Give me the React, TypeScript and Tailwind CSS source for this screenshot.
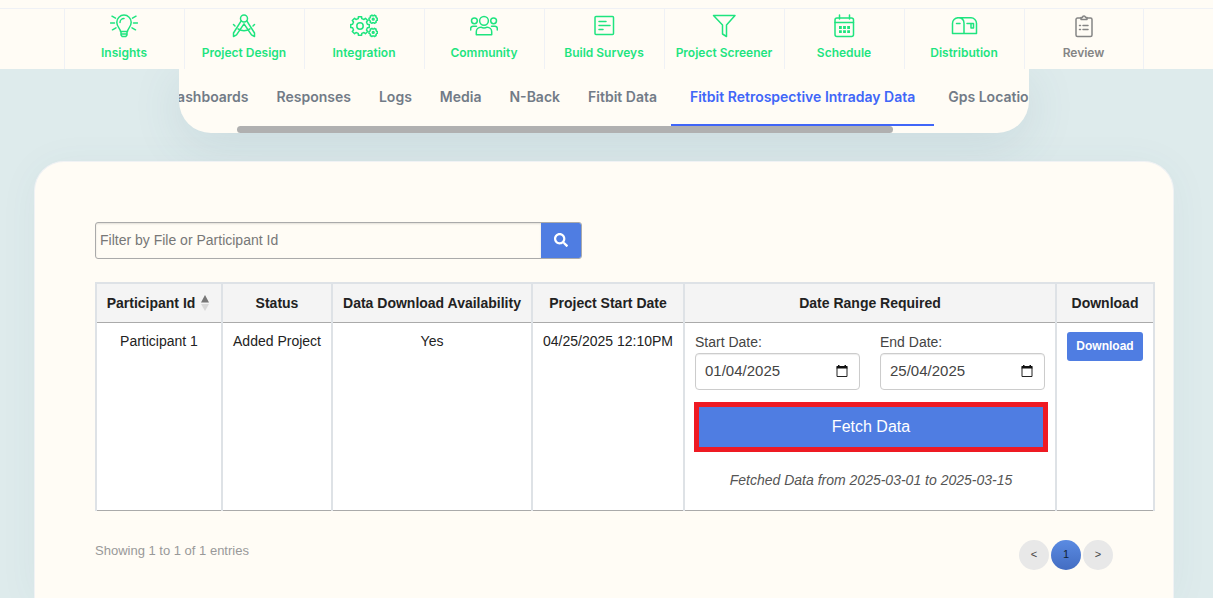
import { useState } from "react"
import type { ReactNode } from "react"
import clsx from "clsx"
import { FaSearch } from "react-icons/fa"

interface Step {
  label: string
  icon: ReactNode
  done: boolean
}

interface DateFieldProps {
  id: string
  label: string
  value: string
  onChange: (value: string) => void
}

const gear = (cx: number, cy: number, outer: number, inner: number, teeth: number) => {
  const step = (Math.PI * 2) / teeth
  const points: string[] = []
  for (let i = 0; i < teeth; i++) {
    const a = i * step
    const corners = [
      [inner, -0.3],
      [outer, -0.22],
      [outer, 0.22],
      [inner, 0.3],
    ]
    corners.forEach(([r, offset]) => {
      const angle = a + offset * step
      points.push(`${(cx + r * Math.cos(angle)).toFixed(2)} ${(cy + r * Math.sin(angle)).toFixed(2)}`)
    })
  }
  return `M${points.join("L")}Z`
}

const steps: Step[] = [
  {
    label: "Insights",
    done: true,
    icon: (
      <>
        <path d="M10.5 17.5c0-3-3.7-4.2-3.7-9.2a7.2 7.2 0 0 1 14.4 0c0 5-3.7 6.2-3.7 9.2z" />
        <path d="M11 17.5v3.6l1.2 1.4h3.6l1.2-1.4v-3.6M11 20h6M10 8.5a4 4 0 0 1 4-4" />
        <path d="M.5 9h4M23.5 9h4M2 2.2l3.500 2M26 2.2l-3.500 2M2.500 15.800l3.500-2M25.500 15.800l-3.500-2" />
      </>
    ),
  },
  {
    label: "Project Design",
    done: true,
    icon: (
      <>
        <circle cx="14" cy="4.5" r="3.5" />
        <path d="M11.2 6.800L3.500 19v3.500l3-1.600L14 9.800l7.500 11.100 3 1.600V19L16.800 6.800" />
        <path d="M3.500 10.500L5 12M8 14.800c3.500 2.200 8.500 2.200 12 0M23 12l1.500-1.500" />
      </>
    ),
  },
  {
    label: "Integration",
    done: true,
    icon: (
      <>
        <path d={gear(10, 12, 9.4, 7.6, 8)} />
        <circle cx="10" cy="12" r="3.2" />
        <path d={gear(23.2, 5.2, 4.3, 3.6, 6)} />
        <circle cx="23.2" cy="5.2" r="0.9" />
        <path d={gear(23.2, 18.4, 4.3, 3.6, 6)} />
        <circle cx="23.2" cy="18.4" r="0.9" />
      </>
    ),
  },
  {
    label: "Community",
    done: true,
    icon: (
      <>
        <circle cx="14" cy="6.8" r="4.4" />
        <circle cx="4.4" cy="6.8" r="2.9" />
        <circle cx="23.6" cy="6.8" r="2.9" />
        <path d="M6.3 20.7v-3a4.5 4.5 0 0 1 4.5-4.5c2 1 4.4 1 6.4 0a4.5 4.5 0 0 1 4.5 4.5v3z" />
        <path d="M.7 16v-1.500a2.300 2.300 0 0 1 2.300-2.300h3.500M27.300 16v-1.500a2.300 2.300 0 0 0-2.300-2.300h-3.500" />
      </>
    ),
  },
  {
    label: "Build Surveys",
    done: true,
    icon: (
      <>
        <rect x="5" y="2.5" width="18.5" height="18" rx="1" />
        <path d="M9 7.5h7M9 11.5h11M9 15.5h4" />
      </>
    ),
  },
  {
    label: "Project Screener",
    done: true,
    icon: <path d="M3.5 1.5h21.5l-8.5 9.5v11.5l-4-2.500v-9z" />,
  },
  {
    label: "Schedule",
    done: true,
    icon: (
      <>
        <rect x="5" y="4" width="18.5" height="18.5" rx="2" />
        <path d="M5 8.5h18.500M9.500 1v4M19.500 1v4" />
        <path d="M9 13.500h11M9 17.700h11" strokeWidth="2.8" strokeDasharray="2.8 1.3" strokeLinecap="butt" />
      </>
    ),
  },
  {
    label: "Distribution",
    done: true,
    icon: (
      <>
        <path d="M8 3.800h13a5.500 5.500 0 0 1 5.500 5.500v10.200h-24V9.500A5.600 5.600 0 0 1 8 3.800c4 0 6 2.500 6 5.500v10" />
        <path d="M6.500 9.500h3.500M17 9.500h6.500v4.500h-2.500v-4.500" />
      </>
    ),
  },
  {
    label: "Review",
    done: false,
    icon: (
      <>
        <path d="M11 4H7.500A1.500 1.500 0 0 0 6 5.500V21a1.500 1.500 0 0 0 1.500 1.500h13A1.500 1.500 0 0 0 22 21V5.500A1.500 1.500 0 0 0 20.500 4H17" />
        <path d="M11 3.500h1.500a1.500 1.500 0 0 1 3 0H17v2h-6z" />
        <path d="M9.500 11.500h1M13 11.500h5M9.500 15.500h1M13 15.500h5" />
      </>
    ),
  },
]

const tabs = [
  "Dashboards",
  "Responses",
  "Logs",
  "Media",
  "N-Back",
  "Fitbit Data",
  "Fitbit Retrospective Intraday Data",
  "Gps Location",
]

const columns = [
  { label: "Participant Id", width: "w-[126px]" },
  { label: "Status", width: "w-[110px]" },
  { label: "Data Download Availability", width: "w-[200px]" },
  { label: "Project Start Date", width: "w-[152px]" },
  { label: "Date Range Required", width: "w-[372px]" },
  { label: "Download", width: "w-[98px]" },
]

const cell = "border-x-2 border-b border-x-[#dee2e6] border-b-[#aaa] bg-white pt-2 align-top whitespace-nowrap"

const StepNav = () => (
  <header className="relative z-10 bg-[#fffcf5] pt-2">
    <nav className="flex justify-center border-t border-[#eff1f5] pr-[5px]">
      {steps.map((step) => (
        <a
          key={step.label}
          href="#"
          className={clsx(
            "flex h-[60px] w-[120px] flex-col items-center border-l border-[#eff1f5] pt-[5px] pr-px text-xs font-semibold last:border-r",
            step.done ? "text-[#1ee47f]" : "text-[#858585]",
          )}
        >
          <svg
            viewBox="0 0 28 24"
            className="h-6 w-7"
            fill="none"
            stroke="currentColor"
            strokeWidth="1.5"
            strokeLinecap="round"
            strokeLinejoin="round"
            aria-hidden="true"
          >
            {step.icon}
          </svg>
          <span className="mt-[7px] leading-4 whitespace-nowrap">{step.label}</span>
        </a>
      ))}
    </nav>
  </header>
)

const TabNav = () => {
  const [active, setActive] = useState("Fitbit Retrospective Intraday Data")

  return (
    <div className="flex justify-center pr-[5px]">
      <div className="w-[850px] overflow-hidden rounded-b-[32px] bg-[#fffcf5] shadow-[0_12px_50px_rgba(60,100,120,0.12)]">
        <div className="-ml-[26px] flex" role="tablist">
          {tabs.map((tab) => (
            <button
              key={tab}
              type="button"
              role="tab"
              aria-selected={tab === active}
              onClick={() => setActive(tab)}
              className={clsx(
                "h-[57px] shrink-0 border-b-2 text-sm font-semibold whitespace-nowrap",
                tab === active ? "border-[#4066f8] px-[19px] text-[#4066f8]" : "border-transparent px-3.5 text-[#727b87]",
              )}
            >
              {tab}
            </button>
          ))}
        </div>
        <div className="ml-[58px] h-[7px] w-[656px] rounded-full bg-[#b0b0b0]" />
      </div>
    </div>
  )
}

const DateField = ({ id, label, value, onChange }: DateFieldProps) => (
  <div className="flex-1">
    <label htmlFor={id} className="mb-px block leading-5 text-[#444]">
      {label}
    </label>
    <div className="flex h-[37px] items-center rounded border border-[#ccc] pr-[11px] pl-[9px] shadow-[inset_0_1px_1px_rgba(0,0,0,0.075)]">
      <input
        id={id}
        value={value}
        onChange={(e) => onChange(e.target.value)}
        className="w-full min-w-0 bg-transparent text-[15px] text-[#444] outline-none"
      />
      <svg viewBox="0 0 12 13" className="h-[13px] w-3 shrink-0" aria-hidden="true">
        <path d="M1 2.500h10v9H1z" fill="none" stroke="#222" />
        <path d="M.5 1h11v2.500H.5zM2 0h1.500v2H2zM8.500 0H10v2H8.500z" fill="#111" />
      </svg>
    </div>
  </div>
)

const Participants = () => {
  const [startDate, setStartDate] = useState("01/04/2025")
  const [endDate, setEndDate] = useState("25/04/2025")

  return (
    <table className="w-[1060px] border-collapse text-center text-sm text-[#222]">
      <thead>
        <tr>
          {columns.map((column, i) => (
            <th
              key={column.label}
              className={clsx(
                "h-[39px] border-x-2 border-t-2 border-b border-[#dee2e6] border-b-[#aaa] bg-[#f4f4f4] font-bold whitespace-nowrap",
                column.width,
              )}
            >
              {i === 0 ? (
                <div className="flex items-center justify-center gap-1.5 pr-0.5">
                  {column.label}
                  <svg viewBox="0 0 8 16" className="h-4 w-2" aria-hidden="true">
                    <path d="M4 0l4 7.500H0z" fill="#777" />
                    <path d="M4 16l4-7H0z" fill="#d8d8d8" />
                  </svg>
                </div>
              ) : (
                column.label
              )}
            </th>
          ))}
        </tr>
      </thead>
      <tbody>
        <tr>
          <td className={cell}>Participant 1</td>
          <td className={cell}>Added Project</td>
          <td className={cell}>Yes</td>
          <td className={cell}>04/25/2025 12:10PM</td>
          <td className={clsx(cell, "pr-[7px] pb-5 pl-[9px]")}>
            <div className="flex gap-5 pt-px pr-[3px] pl-px text-left">
              <DateField id="start-date" label="Start Date:" value={startDate} onChange={setStartDate} />
              <DateField id="end-date" label="End Date:" value={endDate} onChange={setEndDate} />
            </div>
            <button
              type="button"
              className="mt-3 block h-[50px] w-full border-5 border-[#ee1a23] bg-[#4f7de2] text-base text-white"
            >
              Fetch Data
            </button>
            <p className="mt-[18px] leading-5 text-[#555] italic">Fetched Data from 2025-03-01 to 2025-03-15</p>
          </td>
          <td className={cell}>
            <button type="button" className="mt-px h-[29px] w-[76px] rounded-[3px] bg-[#4f7de2] text-xs font-bold text-white">
              Download
            </button>
          </td>
        </tr>
      </tbody>
    </table>
  )
}

const App = () => {
  const [filter, setFilter] = useState("")

  return (
    <div className="flex min-h-screen flex-col overflow-hidden bg-[#deebec] font-[Inter,sans-serif]">
      <StepNav />
      <TabNav />
      <main className="relative mt-7 mr-[39px] ml-[34px] flex-1 rounded-t-[30px] border border-b-0 border-[#f0f2f4] bg-[#fffcf5] px-[60px] pt-[60px] pb-7 font-['Liberation_Sans',Arial,sans-serif] shadow-[0_4px_40px_rgba(60,100,120,0.05)]">
        <form
          className="flex h-[37px] w-[487px] overflow-hidden rounded-[3px] border border-[#aaa]"
          onSubmit={(e) => e.preventDefault()}
        >
          <input
            type="text"
            aria-label="Filter by File or Participant Id"
            placeholder="Filter by File or Participant Id"
            value={filter}
            onChange={(e) => setFilter(e.target.value)}
            className="flex-1 pb-0.5 pl-1 text-sm text-[#333] shadow-[inset_0_1px_2px_rgba(0,0,0,0.12)] outline-none placeholder:text-[#777]"
          />
          <button
            type="submit"
            aria-label="Search"
            className="flex w-10 items-center justify-center bg-[#4f7de2] pb-0.5 text-white"
          >
            <FaSearch className="h-3.5 w-3.5" />
          </button>
        </form>

        <div className="mt-[23px]">
          <Participants />
        </div>

        <div className="mt-[29px] flex items-start justify-between">
          <p className="pt-px text-[13px] leading-5 text-[#999]">Showing 1 to 1 of 1 entries</p>
          <nav className="flex gap-0.5 text-[11px] text-[#444]" aria-label="Pagination">
            <button type="button" className="size-[30px] rounded-full bg-[#e8e8e8]">
              &lt;
            </button>
            <button
              type="button"
              aria-current="page"
              className="size-[30px] rounded-full bg-linear-to-b from-[#5b8be2] to-[#436dc2] text-[#123]"
            >
              1
            </button>
            <button type="button" className="size-[30px] rounded-full bg-[#e8e8e8]">
              &gt;
            </button>
          </nav>
        </div>
      </main>
    </div>
  )
}

export default App
